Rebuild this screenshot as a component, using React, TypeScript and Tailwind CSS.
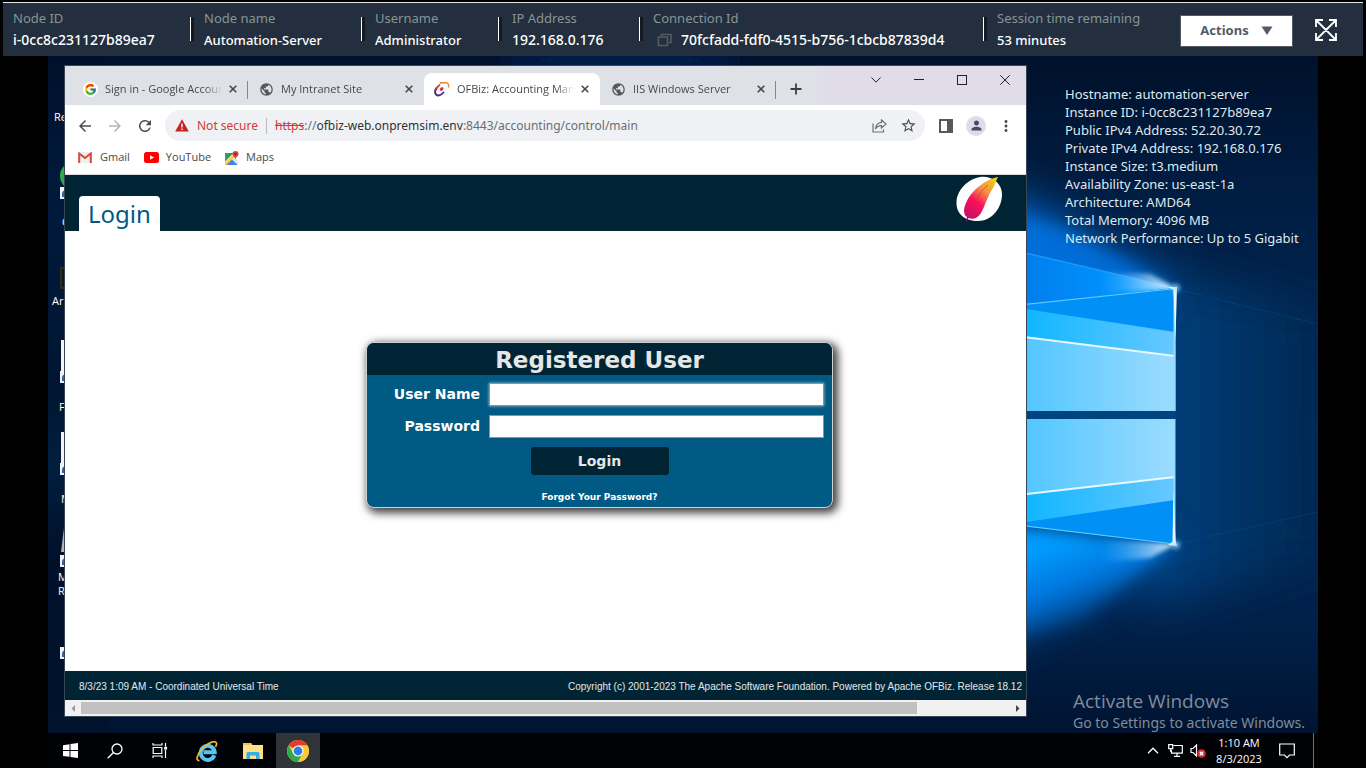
import React from "react";
import { FcGoogle } from "react-icons/fc";
import { MdPublic, MdArrowBack, MdArrowForward, MdRefresh, MdStarBorder, MdMoreVert, MdPerson } from "react-icons/md";

type Fact = { label: string; value: string; width: string; size: string; copy?: boolean };

const facts: Fact[] = [
  { label: "Node ID", value: "i-0cc8c231127b89ea7", width: "w-[191px]", size: "text-[14px]" },
  { label: "Node name", value: "Automation-Server", width: "w-[171px]", size: "text-[13px]" },
  { label: "Username", value: "Administrator", width: "w-[137px]", size: "text-[13px]" },
  { label: "IP Address", value: "192.168.0.176", width: "w-[141px]", size: "text-[14px]" },
  { label: "Connection Id", value: "70fcfadd-fdf0-4515-b756-1cbcb87839d4", width: "w-[344px]", size: "text-[14px]", copy: true },
];

const hostInfo = [
  "Hostname: automation-server",
  "Instance ID: i-0cc8c231127b89ea7",
  "Public IPv4 Address: 52.20.30.72",
  "Private IPv4 Address: 192.168.0.176",
  "Instance Size: t3.medium",
  "Availability Zone: us-east-1a",
  "Architecture: AMD64",
  "Total Memory: 4096 MB",
  "Network Performance: Up to 5 Gigabit",
];

function SessionBar() {
  return (
    <header className="mx-[3px] mt-[2px] flex h-[54px] shrink-0 items-start border-t border-[#e6e6e6] bg-[#232f3e] font-['Noto_Sans',sans-serif] text-[13px] text-white">
      <dl className="flex pt-1">
        {facts.map((f) => (
          <div key={f.label} className={`relative flex shrink-0 flex-col pl-[10px] ${f.width}`}>
            <dt className="h-[22px] whitespace-nowrap leading-[22px] text-[#879596]">{f.label}</dt>
            <dd className={`flex h-[22px] items-center whitespace-nowrap font-medium leading-[22px] ${f.size}`}>
              {f.copy && (
                <button aria-label="Copy connection id" className="mr-2 ml-1">
                  <svg width="16" height="16" viewBox="0 0 16 16" fill="none" stroke="#545b64" strokeWidth="1.6">
                    <path d="M4.5 4.5V2.5h9.5v8h-2" />
                    <path d="M1.5 5h9v8.500h-9z" />
                  </svg>
                </button>
              )}
              {f.value}
            </dd>
            <i className="absolute top-[10px] right-0 h-6 w-1 border-l border-white bg-[#16191f]" />
          </div>
        ))}
        <div className="flex flex-col pl-[10px]">
          <dt className="h-[22px] whitespace-nowrap leading-[22px] text-[#879596]">Session time remaining</dt>
          <dd className="h-[22px] whitespace-nowrap font-medium leading-[22px]">53 minutes</dd>
        </div>
      </dl>
      <div className="mt-3 mr-[26px] ml-auto flex items-center gap-[22px]">
        <button className="flex h-8 w-[113px] items-center justify-center gap-3 border border-[#545b64] bg-white font-bold text-[#545b64]">
          Actions
          <svg width="12" height="10" viewBox="0 0 12 10" fill="#545b64">
            <path d="M.5.500h11L6 9z" />
          </svg>
        </button>
        <button aria-label="Full screen" className="mb-[2px]">
          <svg width="22" height="22" viewBox="0 0 22 22" fill="none" stroke="#fff" strokeWidth="1.800">
            <path d="M1 8V1h7M14 1h7v7M21 14v7h-7M8 21H1v-7M1 1l20 20M21 1L1 21" />
          </svg>
        </button>
      </div>
    </header>
  );
}

function Wallpaper() {
  return (
    <svg className="absolute inset-0 h-full w-full" viewBox="48 56 1270 677" preserveAspectRatio="xMaxYMid slice" aria-hidden="true">
      <defs>
        <linearGradient id="base" x1="0" y1="0" x2="0" y2="1">
          <stop offset="0" stopColor="#00112b" />
          <stop offset="0.2" stopColor="#001d42" />
          <stop offset="0.55" stopColor="#002a58" />
          <stop offset="0.85" stopColor="#002048" />
          <stop offset="1" stopColor="#001431" />
        </linearGradient>
        <linearGradient id="leftEdge" x1="0" y1="0" x2="0" y2="1">
          <stop offset="0" stopColor="#00102a" />
          <stop offset="0.2" stopColor="#001a3c" />
          <stop offset="0.5" stopColor="#001632" />
          <stop offset="0.6" stopColor="#001f3f" />
          <stop offset="0.75" stopColor="#001029" />
          <stop offset="1" stopColor="#00132f" />
        </linearGradient>
        <linearGradient id="right" x1="0" y1="0" x2="1" y2="0">
          <stop offset="0" stopColor="#004280" />
          <stop offset="1" stopColor="#00264f" />
        </linearGradient>
        <linearGradient id="pane" x1="0" y1="0" x2="1" y2="0">
          <stop offset="0" stopColor="#46c2ff" />
          <stop offset="1" stopColor="#9cdcff" />
        </linearGradient>
        <linearGradient id="band" x1="0" y1="0" x2="1" y2="0">
          <stop offset="0" stopColor="#00b4ff" />
          <stop offset="1" stopColor="#68c8ff" />
        </linearGradient>
        <linearGradient id="beam" x1="0" y1="0" x2="1" y2="0">
          <stop offset="0" stopColor="#0078e8" />
          <stop offset="0.7" stopColor="#0095ff" />
          <stop offset="1" stopColor="#4fb8ff" />
        </linearGradient>
        <linearGradient id="flare" x1="0" y1="0" x2="1" y2="0">
          <stop offset="0" stopColor="#4fb8ff" stopOpacity="0" />
          <stop offset="1" stopColor="#e4f6ff" />
        </linearGradient>
        <linearGradient id="lowerBeam" gradientUnits="userSpaceOnUse" x1="1090" y1="530" x2="1125" y2="625">
          <stop offset="0" stopColor="#009cff" />
          <stop offset="0.45" stopColor="#0076dd" />
          <stop offset="1" stopColor="#004487" stopOpacity="0" />
        </linearGradient>
        <filter id="soft10" x="-30%" y="-30%" width="160%" height="160%"><feGaussianBlur stdDeviation="8" /></filter>
        <filter id="soft30" x="-50%" y="-50%" width="200%" height="200%"><feGaussianBlur stdDeviation="22" /></filter>
        <filter id="soft2" x="-50%" y="-50%" width="200%" height="200%"><feGaussianBlur stdDeviation="2" /></filter>
      </defs>
      <rect x="48" y="56" width="1270" height="677" fill="url(#base)" />
      <rect x="48" y="56" width="60" height="677" fill="url(#leftEdge)" />
      <ellipse cx="620" cy="60" rx="120" ry="14" fill="#001f4c" filter="url(#soft10)" />
      <path d="M1140 270L1330 310V560L1140 610z" fill="url(#right)" filter="url(#soft30)" />
      <path d="M900 150L1050 215L1176 288L960 320z" fill="#0068cc" filter="url(#soft30)" />
      <path d="M960 200L1060 228L1176 288L960 320z" fill="#0070dc" opacity=".85" filter="url(#soft10)" />
      <path d="M900 530L1176 544L1090 600L900 680z" fill="#0066c4" opacity=".8" filter="url(#soft30)" />
      <path d="M960 520L1176 544L1080 620L960 650z" fill="url(#lowerBeam)" filter="url(#soft10)" />
      <path d="M1000 247L1176 288L1000 307z" fill="url(#beam)" />
      <path d="M1000 247L1176 288" stroke="#2fa8ff" strokeWidth="1.500" opacity=".6" />
      <path d="M1100 272L1150 274L1176 288L1100 293z" fill="url(#flare)" filter="url(#soft2)" />
      <path d="M1100 540L1176 544L1150 558L1100 562z" fill="url(#flare)" filter="url(#soft2)" />
      <path d="M1000 307L1176 288V411H1000z" fill="#0090f6" />
      <path d="M1000 305L1175 332V356L1000 334z" fill="url(#band)" />
      <path d="M1000 334L1175 356V411H1000z" fill="url(#pane)" />
      <path d="M1000 334L1175 356" stroke="#e8f8ff" strokeWidth="2" />
      <path d="M1000 307L1176 288.500" stroke="#5ccaff" strokeWidth="1.200" />
      <path d="M1000 419H1175V544L1000 523z" fill="#0090f6" />
      <path d="M1000 419H1175V500L1000 526z" fill="url(#band)" />
      <path d="M1000 419H1175V477L1000 497z" fill="url(#pane)" />
      <path d="M1000 497L1175 477" stroke="#e8f8ff" strokeWidth="2" />
      <path d="M1000 523L1175 544" stroke="#5ccaff" strokeWidth="1.200" />
      <rect x="1000" y="411" width="176" height="8" fill="#00447f" />
      <path d="M1174.500 288V411M1174.500 419V544" stroke="#8fdcff" strokeWidth="2" />
      <path d="M1168 287L1177 287L1175.500 340L1173.500 290z" fill="#eaf8ff" />
      <path d="M1173.500 490L1175.500 540L1177 546L1168 545L1172.500 542z" fill="#eaf8ff" />
      <circle cx="1176" cy="288" r="4" fill="#9adcff" opacity=".7" filter="url(#soft2)" />
      <circle cx="1176" cy="545" r="4" fill="#9adcff" opacity=".7" filter="url(#soft2)" />
      <path d="M1180 290L1318 324M1180 543L1318 512" stroke="#0a5498" strokeWidth="1" opacity=".35" />
    </svg>
  );
}

function ShortcutBadge() {
  return (
    <svg width="12" height="12" viewBox="0 0 12 12" aria-hidden="true">
      <rect width="12" height="12" fill="#f2f2f2" />
      <path d="M3 10V7q0-3 4-3" stroke="#2a63b0" strokeWidth="2" fill="none" />
    </svg>
  );
}

function DesktopIcons() {
  return (
    <div className="absolute top-0 left-0 h-full w-10 font-['Open_Sans',sans-serif] text-[11px] leading-[14px] text-white">
      <span className="absolute top-[54px] left-[6px]">Re</span>
      <svg className="absolute top-[106px] left-3" width="28" height="28" viewBox="0 0 28 28"><circle cx="14" cy="14" r="14" fill="#2da94f" /><path d="M4 5Q8 0 14 0V14z" fill="#e33b2e" /></svg>
      <span className="absolute top-[131px] left-3"><ShortcutBadge /></span>
      <span className="absolute top-[159px] left-[14px]">C</span>
      <i className="absolute top-[211px] left-3 h-[22px] w-5 border-2 border-[#2b2b26] bg-[#12181a]" />
      <span className="absolute top-[238px] left-1">Ar</span>
      <i className="absolute top-[284px] left-[13px] h-8 w-5 bg-[#f4f4f4]" />
      <span className="absolute top-[315px] left-3"><ShortcutBadge /></span>
      <span className="absolute top-[344px] left-[11px]">F</span>
      <i className="absolute top-[376px] left-[13px] h-8 w-5 bg-[#f4f4f4]" />
      <span className="absolute top-[407px] left-3"><ShortcutBadge /></span>
      <span className="absolute top-[436px] left-[13px]">M</span>
      <svg className="absolute top-[472px] left-[13px]" width="10" height="24" viewBox="0 0 10 24"><path d="M3 0h7v24H0z" fill="#b9b4b4" /></svg>
      <span className="absolute top-[499px] left-3"><ShortcutBadge /></span>
      <span className="absolute top-[514px] left-[10px]">M</span>
      <span className="absolute top-[528px] left-[10px]">R</span>
      <span className="absolute top-[591px] left-3"><ShortcutBadge /></span>
    </div>
  );
}

function CloseGlyph() {
  return (
    <svg width="8" height="8" viewBox="0 0 8 8" stroke="#44474b" strokeWidth="1.600" aria-hidden="true">
      <path d="M.7.700l6.600 6.600M7.300.700L.7 7.300" />
    </svg>
  );
}

function OfbizMark() {
  return (
    <svg width="16" height="16" viewBox="0 0 16 16" fill="none" strokeLinecap="round" aria-hidden="true">
      <path d="M2.300 7C.8 9.500.8 12 2 13.500c2 2 5.500.5 7.500-2" stroke="#4a2a78" strokeWidth="1.900" />
      <path d="M5.500 4C3.800 5.300 2.700 6.800 2 9" stroke="#d0334a" strokeWidth="1.600" />
      <path d="M6.500 2.200V1.700H11C14 1.500 15 3 14.500 6" stroke="#f08a2c" strokeWidth="1.500" />
      <path d="M7.200 8.500l.9-.9" stroke="#e0253c" strokeWidth="2.800" />
    </svg>
  );
}

type TabProps = { icon: React.ReactNode; title: string; active?: boolean; divider?: boolean };

function BrowserTab({ icon, title, active, divider }: TabProps) {
  return (
    <div className={`relative flex h-8 w-[176px] shrink-0 items-center pl-[10px] ${active ? "rounded-t-lg bg-white" : ""}`}>
      <span className="flex w-4 shrink-0 justify-center text-[15px] text-[#55595e]">{icon}</span>
      <button className="ml-[7px] w-[117px] overflow-hidden mask-r-from-85% text-left text-[11px] leading-4 whitespace-nowrap text-[#45494d]">{title}</button>
      <button aria-label={`Close ${title}`} className="ml-[7px]"><CloseGlyph /></button>
      {divider && <i className="absolute top-2 right-0 h-[18px] w-px bg-[#85888c]" />}
    </div>
  );
}

function TabStrip() {
  return (
    <div className="flex h-[39px] shrink-0 bg-linear-to-r from-[#dee1e6] from-78% to-[#e1dde8] to-79% pt-[7px] pl-[7px]">
      <BrowserTab icon={<span className="rounded-full bg-white p-px"><FcGoogle size={13} /></span>} title="Sign in - Google Accounts" divider />
      <BrowserTab icon={<MdPublic />} title="My Intranet Site" />
      <BrowserTab icon={<OfbizMark />} title="OFBiz: Accounting Manager" active />
      <BrowserTab icon={<MdPublic />} title="IIS Windows Server" divider />
      <button aria-label="New tab" className="ml-[14px] flex h-8 items-center">
        <svg width="12" height="12" viewBox="0 0 12 12" stroke="#3c4043" strokeWidth="1.800"><path d="M6 .5v11M.5 6h11" /></svg>
      </button>
      <div className="-mt-[7px] ml-auto flex h-7 text-[#222]">
        <button aria-label="Search tabs" className="flex w-[43px] items-center justify-center">
          <svg width="10" height="6" viewBox="0 0 10 6" fill="none" stroke="currentColor"><path d="M.5.500L5 5.200L9.500.500" /></svg>
        </button>
        <button aria-label="Minimize" className="flex w-[43px] items-center justify-center">
          <svg width="10" height="2" viewBox="0 0 10 2"><rect width="10" height="1" fill="currentColor" /></svg>
        </button>
        <button aria-label="Maximize" className="flex w-[43px] items-center justify-center">
          <svg width="10" height="10" viewBox="0 0 10 10" fill="none" stroke="currentColor"><rect x=".5" y=".5" width="9" height="9" /></svg>
        </button>
        <button aria-label="Close" className="flex w-[43px] items-center justify-center">
          <svg width="10" height="10" viewBox="0 0 10 10" stroke="currentColor"><path d="M.3.300l9.400 9.400M9.700.300L.3 9.700" /></svg>
        </button>
      </div>
    </div>
  );
}

function Toolbar() {
  return (
    <div className="flex h-[38px] shrink-0 items-end bg-white pr-[11px] pb-[2px] pl-[11px] text-[18px] text-[#4b4f53]">
      <div className="flex h-[31px] flex-1 items-center">
        <button aria-label="Back" className="flex w-[30px]"><MdArrowBack /></button>
        <button aria-label="Forward" className="flex w-[30px] text-[#b4b6b8]"><MdArrowForward /></button>
        <button aria-label="Reload" className="flex w-[29px]"><MdRefresh /></button>
        <div className="flex h-[31px] flex-1 items-center rounded-full bg-[#eff1f5] pr-2 pl-[10px] font-['Noto_Sans',sans-serif] text-[12px]">
          <svg width="14" height="13" viewBox="0 0 14 13" aria-hidden="true">
            <path d="M7 .3L13.800 12.500H.2z" fill="#c5221f" />
            <path d="M7 4.500v4M7 9.500v1.500" stroke="#fff" strokeWidth="1.400" />
          </svg>
          <span className="ml-2 whitespace-nowrap text-[#cf3b35]">Not secure</span>
          <i className="mx-2 h-4 w-px bg-[#b8bbc0]" />
          <span className="flex-1 whitespace-nowrap text-[#6a6e73]">
            <s className="text-[#cf3b35]">https</s>://<span className="text-[#303236]">ofbiz-web.onpremsim.env</span>:8443/accounting/control/main
          </span>
          <button aria-label="Share" className="mr-[13px]">
            <svg width="15" height="14" viewBox="0 0 15 14" fill="none" stroke="#6b6f73" strokeWidth="1.200">
              <path d="M1 4.500V13h10.500v-2.500" />
              <path d="M9.500 1L14 5L9.500 9V6.700C7 6.700 5 7.300 3.500 10C3.800 6 6 3.700 9.500 3.300z" />
            </svg>
          </button>
          <button aria-label="Bookmark" className="text-[17px]"><MdStarBorder /></button>
        </div>
        <button aria-label="Side panel" className="ml-[14px]">
          <svg width="14" height="14" viewBox="0 0 14 14"><rect x="1" y="1" width="12" height="12" fill="none" stroke="#54595e" strokeWidth="2" /><rect x="8" y="1" width="6" height="12" fill="#54595e" /></svg>
        </button>
        <button aria-label="Profile" className="ml-[13px] flex size-5 items-center justify-center rounded-full bg-[#dddce8] text-[15px] text-[#47496a]"><MdPerson /></button>
        <button aria-label="More" className="ml-[11px]"><MdMoreVert /></button>
      </div>
    </div>
  );
}

function Bookmarks() {
  return (
    <nav className="flex h-8 shrink-0 items-center border-b border-[#d5d9dc] bg-white pb-[2px] pl-[13px] text-[11px] text-[#45494d]">
      <a href="#gmail" className="flex items-center gap-2">
        <svg width="14" height="11" viewBox="0 0 14 11"><rect width="14" height="11" fill="#eee" rx="1" /><path d="M1.200 11V1.500L7 6l5.800-4.500V11" fill="none" stroke="#d54b3d" strokeWidth="2" /></svg>
        Gmail
      </a>
      <a href="#youtube" className="ml-[14px] flex items-center gap-[7px]">
        <svg width="15" height="11" viewBox="0 0 15 11"><rect width="15" height="11" rx="2.500" fill="#f00" /><path d="M6 3.200L10 5.500L6 7.800z" fill="#fff" /></svg>
        YouTube
      </a>
      <a href="#maps" className="ml-[14px] flex items-center gap-[7px]">
        <svg width="14" height="14" viewBox="0 0 14 14">
          <path d="M0 2h9L0 11z" fill="#2ea35a" /><path d="M0 14V10L8 3l5 7v4z" fill="#e6e6e6" /><path d="M0 12L9 3l1.500 2L2 14H0z" fill="#f8cf43" /><path d="M1.500 14L7 8.500L12.500 14z" fill="#3f82ee" />
          <path d="M0 2h8L0 10.500z" fill="#2ea35a" /><path d="M10.500 8.500C10.500 6 7.500 5.500 7.500 3a3 3 0 0 1 6 0c0 2.500-3 3-3 5.500z" fill="#dc3e31" /><circle cx="10.500" cy="3" r="1" fill="#7d1d16" />
        </svg>
        Maps
      </a>
    </nav>
  );
}

function Feather() {
  return (
    <svg width="48" height="48" viewBox="0 0 48 48" aria-hidden="true">
      <defs>
        <linearGradient id="plume" x1="0.800" y1="0" x2="0.200" y2="1">
          <stop offset="0" stopColor="#f0cc10" /><stop offset=".3" stopColor="#f59345" /><stop offset=".6" stopColor="#fb1058" /><stop offset="1" stopColor="#c0106c" />
        </linearGradient>
      </defs>
      <path d="M25 2C35 0 47 7 47 19C47 33 37 46 23 46C10 46 1 39 1.500 27C2 15 13 4 25 2z" fill="#fff" />
      <path d="M43 2C31 4 12 17 9 35C9 39 10 41 12 42L11 47L13.500 43C18 45 23 43 26 38C30 31 33 20 38 13C40 9 41 6 43 2z" fill="url(#plume)" />
      <path d="M33 10Q25 16 22 25" stroke="#a7502c" strokeWidth=".7" fill="none" />
    </svg>
  );
}

function LoginCard() {
  return (
    <form onSubmit={(e) => e.preventDefault()} className="w-[467px] overflow-hidden rounded-lg border border-[#c9d3d8] bg-[#005a84] font-['DejaVu_Sans',sans-serif] text-[14px] font-bold text-white shadow-[3px_3px_9px_2px_rgba(0,0,0,0.75)]">
      <h1 className="h-8 bg-[#002434] text-center text-[23px] leading-[34px] text-[#e6e6e6]">Registered User</h1>
      <div className="grid grid-cols-[113px_1fr] items-center gap-x-[9px] gap-y-[9px] pt-2 pr-2">
        <label htmlFor="user" className="text-right">User Name</label>
        <input id="user" className="h-[23px] w-full border border-[#8f9498] bg-white px-1 font-normal text-black shadow-[0_0_3px_rgba(255,255,255,0.6)] outline-none" />
        <label htmlFor="pass" className="text-right">Password</label>
        <input id="pass" type="password" className="h-[23px] w-full border border-[#8f9498] bg-white px-1 font-normal text-black outline-none" />
      </div>
      <div className="flex flex-col items-center pt-[9px] pb-[3px]">
        <button className="h-7 w-[138px] rounded-[3px] bg-[#002434] text-[#e6e6e6]">Login</button>
        <a href="#forgot" className="mt-4 text-[9px] leading-[13px]">Forgot Your Password?</a>
      </div>
    </form>
  );
}

function BrowserWindow() {
  return (
    <section className="relative mt-[10px] mb-[17px] ml-[17px] flex min-w-0 flex-1 flex-col overflow-hidden bg-white font-['Open_Sans',sans-serif] shadow-[0_0_0_1px_#3a4654]">
      <TabStrip />
      <Toolbar />
      <Bookmarks />
      <div className="flex h-14 shrink-0 items-end justify-between bg-[#002434] pr-[23px] pl-[14px]">
        <h2 className="rounded-t-[4px] bg-white px-[9px] pt-px font-['Noto_Sans',sans-serif] text-[24px] leading-[34px] text-[#005a84]">Login</h2>
        <div className="mb-2"><Feather /></div>
      </div>
      <main className="flex-1 overflow-hidden">
        <div className="flex w-[1069px] justify-center pt-[111px]"><LoginCard /></div>
      </main>
      <footer className="flex h-[29px] shrink-0 items-center justify-between bg-[#002434] pr-1 pl-[14px] font-['Liberation_Sans',sans-serif] text-[10px] text-[#e3e8ea]">
        <span className="pt-px">8/3/23 1:09 AM - Coordinated Universal Time</span>
        <span className="pt-px">Copyright (c) 2001-2023 The Apache Software Foundation. Powered by Apache OFBiz. Release 18.12</span>
      </footer>
      <div className="flex h-4 shrink-0 items-center bg-[#f1f1f1] px-[6px]">
        <svg width="5" height="7" viewBox="0 0 5 7" fill="#9a9a9a"><path d="M4 0v7L.5 3.500z" /></svg>
        <div className="mx-[5px] h-3 flex-1"><div className="h-full w-[90%] bg-[#c1c1c1]" /></div>
        <svg width="5" height="7" viewBox="0 0 5 7" fill="#454545"><path d="M1 0v7l3.500-3.500z" /></svg>
      </div>
    </section>
  );
}

function ChromeLogo() {
  return (
    <svg width="22" height="22" viewBox="0 0 22 22">
      <circle cx="11" cy="11" r="11" fill="#fcc934" />
      <path d="M11 11L1.500 5.500A11 11 0 0 1 20.500 5.500H11z" fill="#e33b2e" />
      <path d="M1.500 5.500A11 11 0 0 0 11 22L15.700 13.800L11 11L6.300 13.800z" fill="#2da94f" />
      <path d="M20.500 5.500H11l4.700 8.300L11 22A11 11 0 0 0 20.500 5.500z" fill="#fcc934" />
      <circle cx="11" cy="11" r="5.500" fill="#fff" /><circle cx="11" cy="11" r="4.400" fill="#2f7de9" />
    </svg>
  );
}

function Taskbar() {
  return (
    <nav className="flex h-[35px] shrink-0 items-stretch bg-[#010205] font-['Open_Sans',sans-serif] text-[11px] text-white">
      <button aria-label="Start" className="flex w-[44px] items-center justify-center">
        <svg width="15" height="15" viewBox="0 0 15 15" fill="#fff"><path d="M0 2.200L6.500 1.200V7H0zM7.500 1.100L15 0V7H7.500zM0 8h6.500v5.800L0 12.900zM7.500 8H15v7l-7.500-1.100z" /></svg>
      </button>
      <button aria-label="Search" className="flex w-[46px] items-center justify-center">
        <svg width="16" height="16" viewBox="0 0 16 16" fill="none" stroke="#fff" strokeWidth="1.300"><circle cx="10" cy="6" r="5" /><path d="M6.500 9.500L.7 15.300" /></svg>
      </button>
      <button aria-label="Task view" className="mr-[2px] flex w-[44px] items-center justify-center">
        <svg width="16" height="15" viewBox="0 0 16 15" fill="none" stroke="#fff" strokeWidth="1.200"><path d="M1 0v2h9V0M1 15v-2h9v2M1.200 4.500h8.600v6H1.200zM13.500 0v3.500M13.500 7v8" /><rect x="12.800" y="4.300" width="1.700" height="1.700" fill="#fff" /></svg>
      </button>
      <button aria-label="Internet Explorer" className="flex w-[46px] items-center justify-center">
        <svg width="22" height="22" viewBox="0 0 22 22" fill="none">
          <path d="M18.300 15.300A7 7 0 1 1 18.700 12.300H7.500" stroke="#54c4f2" strokeWidth="4" />
          <path d="M3.500 20.500C-1 21 1 14 7 8C13 1.500 20 .5 20.500 3C20.800 4 20 6 19.500 7" stroke="#f5b92a" strokeWidth="1.700" />
        </svg>
      </button>
      <button aria-label="File Explorer" className="flex w-[46px] items-center justify-center">
        <svg width="20" height="18" viewBox="0 0 20 18">
          <path d="M0 1h8l1.500 2H20v14H0z" fill="#fde08a" /><path d="M0 1h8l1 2H0z" fill="#f3c24c" />
          <path d="M3.500 17v-5.500q0-1.500 1.500-1.500h10q1.500 0 1.500 1.500V17H13v-3.500H7V17z" fill="#35aee5" />
        </svg>
      </button>
      <button aria-label="Google Chrome" className="flex w-[44px] items-center justify-center bg-[#303338]"><ChromeLogo /></button>
      <div className="ml-auto flex items-center">
        <button aria-label="Show hidden icons" className="mr-[9px]"><svg width="12" height="7" viewBox="0 0 12 7" fill="none" stroke="#fff" strokeWidth="1.300"><path d="M1 6.300L6 1.200L11 6.300" /></svg></button>
        <button aria-label="Network" className="mr-[7px]"><svg width="15" height="13" viewBox="0 0 15 13" fill="none" stroke="#fff" strokeWidth="1.200"><path d="M5.500 1.500H14.300V9.200H3.500V6M6 12.300h6M9 9.200v3M.7.700h4v4h-4zM2.700 5v3" /></svg></button>
        <button aria-label="Volume muted" className="mr-[10px]">
          <svg width="16" height="14" viewBox="0 0 16 14" fill="none"><path d="M1 4.500h2L6.500 1v11L3 8.500H1z" stroke="#fff" strokeWidth="1.200" /><circle cx="11.500" cy="9.500" r="4.300" fill="#dd2a33" /><path d="M9.800 7.800l3.400 3.400M13.200 7.800l-3.400 3.400" stroke="#fff" strokeWidth="1.300" /></svg>
        </button>
        <div className="w-[46px] text-center leading-4"><div>1:10 AM</div><div>8/3/2023</div></div>
        <button aria-label="Notifications" className="mr-[18px] ml-[17px]"><svg width="16" height="16" viewBox="0 0 16 16" fill="none" stroke="#fff" strokeWidth="1.200"><path d="M.7 1h14.600v11H10.500L8 14.700L5.500 12H.7z" /></svg></button>
        <i className="mr-1 h-[35px] w-px bg-[#6b6d70]" />
      </div>
    </nav>
  );
}

export default function App() {
  return (
    <div className="flex min-h-screen flex-col overflow-hidden bg-black">
      <SessionBar />
      <div className="mx-12 flex flex-1 flex-col">
        <div className="relative flex flex-1 overflow-hidden">
          <Wallpaper />
          <DesktopIcons />
          <BrowserWindow />
          <aside className="relative flex w-[292px] shrink-0 flex-col justify-between pt-[29px]">
            <ul className="pl-[39px] font-['Noto_Sans',sans-serif] text-[13px] leading-[18px] whitespace-nowrap text-[#dfe9ee]">
              {hostInfo.map((line) => <li key={line}>{line}</li>)}
            </ul>
            <div className="pl-[47px] font-['Open_Sans',sans-serif] whitespace-nowrap text-[#7f8c9d]">
              <p className="text-[19px] leading-6">Activate Windows</p>
              <p className="font-['Noto_Sans',sans-serif] text-[14px] leading-5">Go to Settings to activate Windows.</p>
            </div>
          </aside>
        </div>
        <Taskbar />
      </div>
    </div>
  );
}
